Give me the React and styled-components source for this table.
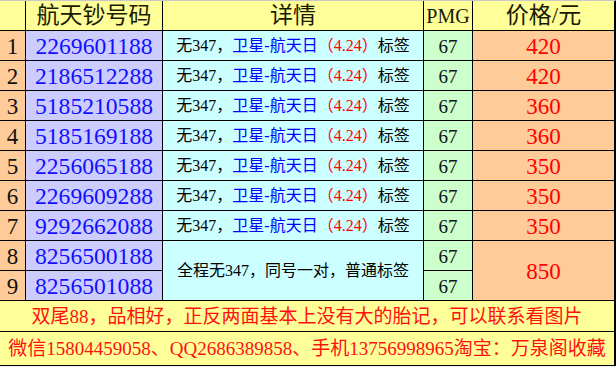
import React from 'react';
import styled, { createGlobalStyle } from 'styled-components';

const GlobalStyle = createGlobalStyle`
    body {
        margin: 0;
        background: #f0f0f0;
        font-family: "Liberation Serif", "Noto Sans CJK SC", serif;
    }
`;

const Sheet = styled.div`
    width: 615px;
    display: grid;
    grid-template-columns: 25px 136px 260px 48px 141px;
    grid-template-rows: repeat(10, 29px) 30px 33px;
    gap: 1px;
    background: #000;
    border-top: 1px solid #c8c8c8;
    border-right: 1px solid #000;
    border-bottom: 1px solid #000;
`;

const Cell = styled.div`
    display: flex;
    align-items: center;
    justify-content: center;
    white-space: nowrap;
    overflow: hidden;
    background: ${p => p.$bg};
    grid-row: ${p => p.$rows ? `span ${p.$rows}` : 'auto'};
    grid-column: ${p => p.$cols ? `span ${p.$cols}` : 'auto'};
`;

const HeadText = styled.span`
    font-size: ${p => p.$size || 23}px;
    color: #1a1a00;
    line-height: 1;
`;

const Index = styled.span`
    font-size: 23px;
    color: #111;
    line-height: 1;
    padding-top: 2px;
`;

const Number = styled.span`
    font-size: 23.6px;
    color: #1010ff;
    line-height: 1;
    padding-top: 2px;
`;

const Detail = styled.span`
    font-size: 16px;
    color: #000;
    line-height: 1;
`;

const Tone = styled.span`
    color: ${p => p.$c};
`;

const Pmg = styled.span`
    font-size: 19px;
    color: #111;
    line-height: 1;
    padding-top: 2px;
`;

const Price = styled.span`
    font-size: 23px;
    color: #ff0000;
    line-height: 1;
    padding-top: 2px;
`;

const Note = styled.span`
    font-size: ${p => p.$size}px;
    color: #ff1010;
    line-height: 1;
`;

const YELLOW = '#ffff99';
const PEACH = '#ffcc99';
const LAVENDER = '#ccccff';
const CYAN = '#ccffff';
const GREEN = '#ccffcc';

const rows = [
    ['1', '2269601188', '420'],
    ['2', '2186512288', '420'],
    ['3', '5185210588', '360'],
    ['4', '5185169188', '360'],
    ['5', '2256065188', '350'],
    ['6', '2269609288', '350'],
    ['7', '9292662088', '350'],
];

const DetailLine = () => (
    <Detail>
        无347，<Tone $c="#0000ff">卫星-航天日</Tone><Tone $c="#ff0000">（4.24）</Tone>标签
    </Detail>
);

export default function App() {
    return (
        <>
            <GlobalStyle />
            <Sheet>
                <Cell $bg={YELLOW} />
                <Cell $bg={YELLOW}><HeadText>航天钞号码</HeadText></Cell>
                <Cell $bg={YELLOW}><HeadText>详情</HeadText></Cell>
                <Cell $bg={YELLOW}><HeadText $size={20}>PMG</HeadText></Cell>
                <Cell $bg={YELLOW}><HeadText>价格/元</HeadText></Cell>

                {rows.map(([idx, num, price]) => (
                    <React.Fragment key={idx}>
                        <Cell $bg={PEACH}><Index>{idx}</Index></Cell>
                        <Cell $bg={LAVENDER}><Number>{num}</Number></Cell>
                        <Cell $bg={CYAN}><DetailLine /></Cell>
                        <Cell $bg={GREEN}><Pmg>67</Pmg></Cell>
                        <Cell $bg={PEACH}><Price>{price}</Price></Cell>
                    </React.Fragment>
                ))}

                <Cell $bg={PEACH}><Index>8</Index></Cell>
                <Cell $bg={LAVENDER}><Number>8256500188</Number></Cell>
                <Cell $bg={CYAN} $rows={2}><Detail>全程无347，同号一对，普通标签</Detail></Cell>
                <Cell $bg={GREEN}><Pmg>67</Pmg></Cell>
                <Cell $bg={PEACH} $rows={2}><Price>850</Price></Cell>
                <Cell $bg={PEACH}><Index>9</Index></Cell>
                <Cell $bg={LAVENDER}><Number>8256501088</Number></Cell>
                <Cell $bg={GREEN}><Pmg>67</Pmg></Cell>

                <Cell $bg={YELLOW} $cols={5}>
                    <Note $size={19}>双尾88，品相好，正反两面基本上没有大的胎记，可以联系看图片</Note>
                </Cell>
                <Cell $bg={YELLOW} $cols={5}>
                    <Note $size={19}>微信15804459058、QQ2686389858、手机13756998965淘宝：万泉阁收藏</Note>
                </Cell>
            </Sheet>
        </>
    );
}
